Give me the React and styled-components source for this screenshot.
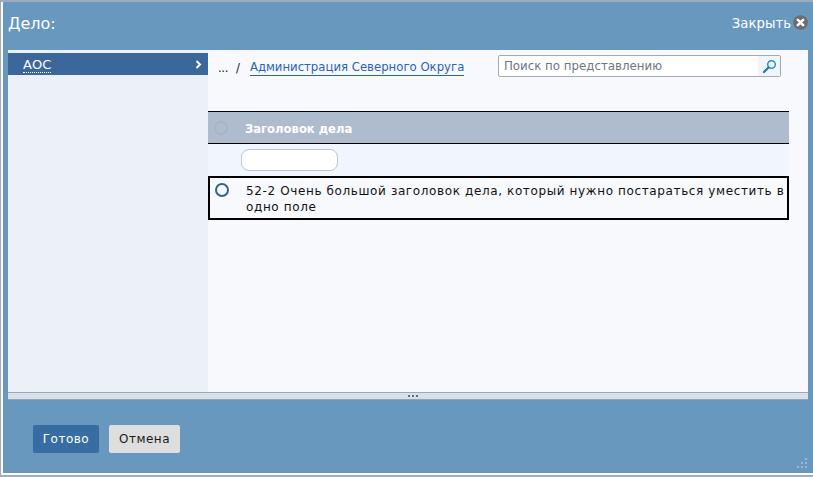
import styled, { createGlobalStyle } from "styled-components";

const GlobalStyle = createGlobalStyle`
  html, body {
    margin: 0;
    padding: 0;
    height: 100%;
    overflow: hidden;
    background: #9fabbb;
  }
  body {
    font-family: "DejaVu Sans", Verdana, sans-serif;
  }
`;

const Page = styled.div`
  width: 813px;
  height: 477px;
  padding: 2px 0 2px 1px;
  box-sizing: border-box;
`;
const Dialog = styled.div`
  position: relative;
  height: 473px;
  width: 812px;
  box-sizing: border-box;
  border-left: 2px solid #fff;
  border-bottom: 2px solid #fff;
  background: #6898bd;
  display: flex;
  flex-direction: column;
`;
const Header = styled.div`
  height: 48px;
  flex: none;
  display: flex;
  justify-content: space-between;
  padding: 12px 5px 0 5px;
  box-sizing: border-box;
`;
const Title = styled.div`
  color: #fff;
  font-size: 16px;
  line-height: 20px;
`;
const Close = styled.div`
  display: flex;
  align-items: flex-start;
  gap: 2px;
  color: #fff;
  font-size: 13.3px;
  line-height: 19px;
`;
const CloseIcon = styled.svg`
  width: 15px;
  height: 15px;
  margin-top: 1px;
`;
const Body = styled.div`
  flex: none;
  height: 342px;
  margin: 0 5px 0 5px;
  display: flex;
  background: #f8f9fd;
`;
const Sidebar = styled.div`
  width: 200px;
  flex: none;
  padding-top: 3px;
  background: #ecf0f8;
`;
const SideItem = styled.div`
  height: 22px;
  background: #3c679b;
  display: flex;
  align-items: center;
  justify-content: space-between;
  padding: 0 6px 0 15px;
  color: #fff;
  font-size: 13px;
`;
const SideLabel = styled.span`
  line-height: 15px;
  margin-top: 1px;
  border-bottom: 1px dotted #fff;
`;
const Content = styled.div`
  flex: 1;
  min-width: 0;
`;
const TopRow = styled.div`
  height: 61px;
  display: flex;
  align-items: flex-start;
  box-sizing: border-box;
  padding: 5px 0 0 10px;
`;
const Crumbs = styled.div`
  width: 280px;
  display: flex;
  align-items: center;
  height: 20px;
  margin-top: 3px;
  font-size: 11.7px;
  color: #222;
`;
const Dots = styled.span`
  letter-spacing: -0.4px;
`;
const Slash = styled.span`
  margin: 0 10px 0 8px;
`;
const CrumbLink = styled.a`
  color: #2a62b8;
  line-height: 15px;
  border-bottom: 1px solid #2a62b8;
`;
const Search = styled.div`
  width: 283px;
  height: 22px;
  box-sizing: border-box;
  border: 1px solid #a3a9b8;
  border-radius: 2px;
  background: #fff;
  display: flex;
  align-items: center;
  justify-content: space-between;
  padding-left: 5px;
  font-size: 11.8px;
  color: #6f7580;
`;
const SearchIcon = styled.div`
  width: 22px;
  height: 20px;
  display: flex;
  align-items: center;
  justify-content: center;
  background: #f1f5f8;
`;
const Table = styled.div`
  width: 581px;
`;
const HeadRow = styled.div`
  height: 33px;
  box-sizing: border-box;
  border-top: 1px solid #000;
  border-bottom: 1px solid #000;
  background: #afbccd;
  display: flex;
  align-items: center;
  color: #fff;
  font-size: 11.6px;
  font-weight: bold;
`;
const HeadLabel = styled.span`
  margin-top: 2px;
`;
const Radio = styled.span`
  width: 14px;
  height: 14px;
  flex: none;
  box-sizing: border-box;
  border-radius: 50%;
  border: 2px solid ${(p) => (p.$muted ? "#a9b5c5" : "#34628f")};
  margin: 0 17px 0 ${(p) => (p.$muted ? "6px" : "5px")};
`;
const FilterRow = styled.div`
  height: 32px;
  background: #f1f5fe;
  display: flex;
  align-items: flex-start;
  padding: 5px 0 0 33px;
  box-sizing: border-box;
`;
const FilterInput = styled.div`
  width: 97px;
  height: 22px;
  box-sizing: border-box;
  border: 1px solid #b8c4da;
  border-radius: 8px;
  background: #fff;
`;
const DataRow = styled.div`
  height: 44px;
  box-sizing: border-box;
  border: 2px solid #000;
  display: flex;
  align-items: flex-start;
  padding-top: 5px;
  font-size: 12px;
  line-height: 16px;
  color: #111;
`;
const RowText = styled.div`
  flex: 1;
  letter-spacing: 0.62px;
`;
const Splitter = styled.div`
  height: 8px;
  margin: 0 5px;
  padding-left: 10px;
  flex: none;
  box-sizing: border-box;
  border-top: 1px solid #95acc4;
  border-bottom: 1px solid #8ea5bf;
  background: #dae0e6;
  display: flex;
  justify-content: center;
  align-items: center;
  gap: 2px;
`;
const GripDot = styled.span`
  width: 2px;
  height: 2px;
  background: #5e7186;
`;
const Footer = styled.div`
  flex: 1;
  display: flex;
  align-items: flex-start;
  gap: 10px;
  padding: 25px 0 0 30px;
`;
const Button = styled.div`
  height: 28px;
  box-sizing: border-box;
  border-radius: 2px;
  display: flex;
  align-items: center;
  justify-content: center;
  font-size: 12px;
  letter-spacing: 0.5px;
  width: ${(p) => (p.$primary ? "66px" : "71px")};
  color: ${(p) => (p.$primary ? "#fff" : "#1a1a1a")};
  background: ${(p) => (p.$primary ? "#376da3" : "#dedede")};
`;
const Grip = styled.svg`
  position: absolute;
  right: 4px;
  bottom: 4px;
  width: 12px;
  height: 12px;
`;

const App = () => {
  return (
    <Page>
      <GlobalStyle />
      <Dialog>
        <Header>
          <Title>Дело:</Title>
          <Close>
            Закрыть
            <CloseIcon viewBox="0 0 14 14">
              <circle cx="7" cy="7" r="6.8" fill="#6c6c6c" />
              <path d="M4.5 4.5l5 5M9.5 4.5l-5 5" stroke="#fff" strokeWidth="2.4" strokeLinecap="round" />
            </CloseIcon>
          </Close>
        </Header>
        <Body>
          <Sidebar>
            <SideItem>
              <SideLabel>АОС</SideLabel>
              <svg width="7" height="9" viewBox="0 0 7 9">
                <path d="M1.5 1l3.5 3.5L1.5 8" fill="none" stroke="#fff" strokeWidth="2" />
              </svg>
            </SideItem>
          </Sidebar>
          <Content>
            <TopRow>
              <Crumbs>
                <Dots>...</Dots>
                <Slash>/</Slash>
                <CrumbLink>Администрация Северного Округа</CrumbLink>
              </Crumbs>
              <Search>
                Поиск по представлению
                <SearchIcon>
                  <svg width="15" height="15" viewBox="0 0 15 15">
                    <circle cx="9.5" cy="5.5" r="3.8" fill="none" stroke="#2a8fd0" strokeWidth="1.5" />
                    <path d="M6.5 8.5L2 13" stroke="#1877b8" strokeWidth="2.2" strokeLinecap="round" />
                  </svg>
                </SearchIcon>
              </Search>
            </TopRow>
            <Table>
              <HeadRow>
                <Radio $muted />
                <HeadLabel>Заголовок дела</HeadLabel>
              </HeadRow>
              <FilterRow>
                <FilterInput />
              </FilterRow>
              <DataRow>
                <Radio />
                <RowText>52-2 Очень большой заголовок дела, который нужно постараться уместить в одно поле</RowText>
              </DataRow>
            </Table>
          </Content>
        </Body>
        <Splitter>
          <GripDot />
          <GripDot />
          <GripDot />
        </Splitter>
        <Footer>
          <Button $primary>Готово</Button>
          <Button>Отмена</Button>
        </Footer>
        <Grip viewBox="0 0 12 12">
          <path d="M8 1h2v2H8zM4 5h2v2H4zM8 5h2v2H8zM0 9h2v2H0zM4 9h2v2H4zM8 9h2v2H8z" fill="#9ab6d0" />
        </Grip>
      </Dialog>
    </Page>
  );
};
export default App;
